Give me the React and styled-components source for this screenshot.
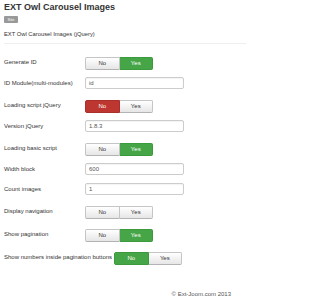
import React from "react";
import styled, { createGlobalStyle, css } from "styled-components";

const Global = createGlobalStyle`
  html, body { margin: 0; padding: 0; background: #fff; }
  body { font-family: "Liberation Sans", Arial, sans-serif; color: #333; }
`;

const Page = styled.div`
  width: 250px;
  height: 300px;
  box-sizing: border-box;
  padding: 2px 4px 0 4px;
  display: flex;
  flex-direction: column;
`;

const Title = styled.h1`
  margin: 0;
  font-size: 9px;
  line-height: 11px;
  font-weight: bold;
  color: #333;
`;

const Badge = styled.span`
  align-self: flex-start;
  margin-top: 3px;
  width: 14px;
  height: 7px;
  border-radius: 1px;
  background: #999;
  color: #fff;
  font-size: 4px;
  line-height: 7px;
  text-align: center;
`;

const Description = styled.p`
  margin: 7px 0 0 0;
  font-size: 5.8px;
  line-height: 8px;
`;

const Divider = styled.hr`
  margin: 5px 0 0 0;
  border: 0;
  border-top: 1px solid #eee;
  height: 0;
`;

const Form = styled.div`
  margin-top: 10px;
  display: flex;
  flex-direction: column;
`;

const Row = styled.div`
  display: flex;
  align-items: flex-start;
  ${(p) =>
    p.$kind === "toggle"
      ? css`
          height: 23px;
          padding-top: 3px;
        `
      : css`
          height: 20px;
        `}
  box-sizing: border-box;
`;

const Label = styled.label`
  min-width: 79px;
  padding-right: 2px;
  font-size: 6px;
  white-space: nowrap;
  color: #333;
  ${(p) =>
    p.$kind === "toggle"
      ? css`
          line-height: 10px;
        `
      : css`
          line-height: 13px;
        `}
`;

const Toggle = styled.div`
  display: flex;
  width: 68px;
  height: 13px;
`;

const ToggleBtn = styled.span`
  flex: 1;
  box-sizing: border-box;
  font-size: 6px;
  line-height: 11px;
  text-align: center;
  border: 1px solid #c5c5c5;
  border-bottom-color: #b3b3b3;
  background: linear-gradient(#ffffff, #e6e6e6);
  color: #333;
  &:first-child {
    border-radius: 2px 0 0 2px;
  }
  &:last-child {
    border-radius: 0 2px 2px 0;
    border-left: 0;
  }
  ${(p) =>
    p.$active === "yes" &&
    css`
      background: #46a546;
      border-color: #3c9a3c;
      color: #fff;
    `}
  ${(p) =>
    p.$active === "no" &&
    css`
      background: #bd362f;
      border-color: #a9302a;
      color: #fff;
    `}
`;

const Input = styled.div`
  width: 99px;
  height: 12px;
  box-sizing: border-box;
  border: 1px solid #ccc;
  border-radius: 2px;
  padding-left: 3px;
  font-size: 6px;
  line-height: 10px;
  color: #555;
  box-shadow: inset 0 1px 1px rgba(0, 0, 0, 0.05);
`;

const Footer = styled.div`
  margin-top: auto;
  margin-bottom: 2px;
  padding-right: 15px;
  text-align: right;
  font-size: 6px;
  line-height: 8px;
  color: #555;
`;

const rows = [
  { label: "Generate ID", type: "toggle", value: "Yes" },
  { label: "ID Module(multi-modules)", type: "input", value: "id" },
  { label: "Loading script jQuery", type: "toggle", value: "No", danger: true },
  { label: "Version jQuery", type: "input", value: "1.8.3" },
  { label: "Loading basic script", type: "toggle", value: "Yes" },
  { label: "Width block", type: "input", value: "600" },
  { label: "Count images", type: "input", value: "1" },
  { label: "Display navigation", type: "toggle", value: "No" },
  { label: "Show pagination", type: "toggle", value: "Yes" },
  { label: "Show numbers inside pagination buttons", type: "toggle", value: "No", noGreen: true },
];

function ToggleField({ value, danger, noGreen }) {
  let noActive;
  if (value === "No") noActive = danger ? "no" : noGreen ? "yes" : undefined;
  return (
    <Toggle>
      <ToggleBtn $active={noActive}>No</ToggleBtn>
      <ToggleBtn $active={value === "Yes" ? "yes" : undefined}>Yes</ToggleBtn>
    </Toggle>
  );
}

export default function App() {
  return (
    <>
      <Global />
      <Page>
        <Title>EXT Owl Carousel Images</Title>
        <Badge>Site</Badge>
        <Description>EXT Owl Carousel Images (jQuery)</Description>
        <Divider />
        <Form>
          {rows.map((r) => (
            <Row key={r.label} $kind={r.type}>
              <Label $kind={r.type}>{r.label}</Label>
              {r.type === "toggle" ? (
                <ToggleField value={r.value} danger={r.danger} noGreen={r.noGreen} />
              ) : (
                <Input>{r.value}</Input>
              )}
            </Row>
          ))}
        </Form>
        <Footer>© Ext-Joom.com 2013</Footer>
      </Page>
    </>
  );
}
